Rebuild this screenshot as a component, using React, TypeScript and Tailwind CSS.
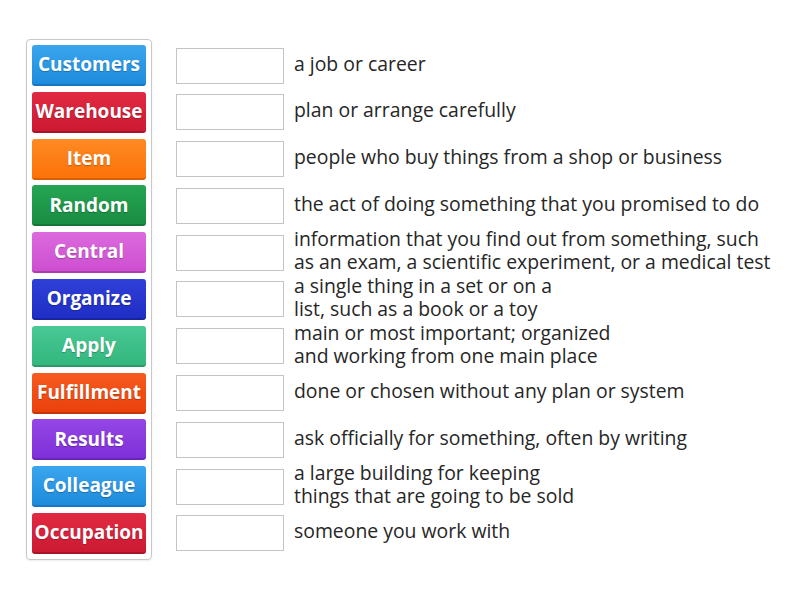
import React from 'react';

const tiles = [
  { label: 'Customers', from: '#3aa6ee', to: '#1e8bdc', edge: '#1877c0' },
  { label: 'Warehouse', from: '#e02a42', to: '#cc1a32', edge: '#a81428' },
  { label: 'Item', from: '#ff8a24', to: '#fb7208', edge: '#d85f04' },
  { label: 'Random', from: '#25a553', to: '#1a8d43', edge: '#147536' },
  { label: 'Central', from: '#dc6ade', to: '#cd4fd0', edge: '#ad3cb0' },
  { label: 'Organize', from: '#2f40d8', to: '#1f2ec4', edge: '#1924a0' },
  { label: 'Apply', from: '#48c995', to: '#34b67f', edge: '#2a9a6a' },
  { label: 'Fulfillment', from: '#f75a1e', to: '#ea410c', edge: '#c4350a' },
  { label: 'Results', from: '#9447e6', to: '#7f2fd8', edge: '#6a24b8' },
  { label: 'Colleague', from: '#3aa6ee', to: '#1e8bdc', edge: '#1877c0' },
  { label: 'Occupation', from: '#e02a42', to: '#cc1a32', edge: '#a81428' },
];

const clues = [
  ['a job or career'],
  ['plan or arrange carefully'],
  ['people who buy things from a shop or business'],
  ['the act of doing something that you promised to do'],
  ['information that you find out from something, such', 'as an exam, a scientific experiment, or a medical test'],
  ['a single thing in a set or on a', 'list, such as a book or a toy'],
  ['main or most important; organized', 'and working from one main place'],
  ['done or chosen without any plan or system'],
  ['ask officially for something, often by writing'],
  ['a large building for keeping', 'things that are going to be sold'],
  ['someone you work with'],
];

export default function App() {
  return (
    <div className="w-[800px] h-[600px] bg-white font-['Open_Sans',sans-serif] relative">
      <div className="flex pt-[39px] pl-[26px]">
        <div className="flex flex-col gap-[5.8px] p-[5px] border border-[#c8c8c8] rounded-[4px] shadow-[0_1px_2px_rgba(0,0,0,0.08)]">
          {tiles.map(t => (
            <div
              key={t.label}
              className="w-[114px] h-[41px] rounded-[3px] flex items-center justify-center text-white font-bold text-[19px] [text-shadow:0_1px_1px_rgba(0,0,0,0.25)]"
              style={{ background: `linear-gradient(${t.from}, ${t.to})`, borderBottom: `2px solid ${t.edge}` }}
            >
              {t.label}
            </div>
          ))}
        </div>
        <div className="flex flex-col gap-[5.8px] pt-[6px] ml-[24px]">
          {clues.map((c, i) => (
            <div key={i} className="h-[41px] flex items-center">
              <div className="w-[108px] h-[36px] border border-[#c4c4c4] bg-white shrink-0" />
              <div className="ml-[10px] mb-[5px] text-[19.4px] leading-[23px] text-[#262626] whitespace-nowrap">
                {c.map(l => <div key={l}>{l}</div>)}
              </div>
            </div>
          ))}
        </div>
      </div>
    </div>
  );
}
